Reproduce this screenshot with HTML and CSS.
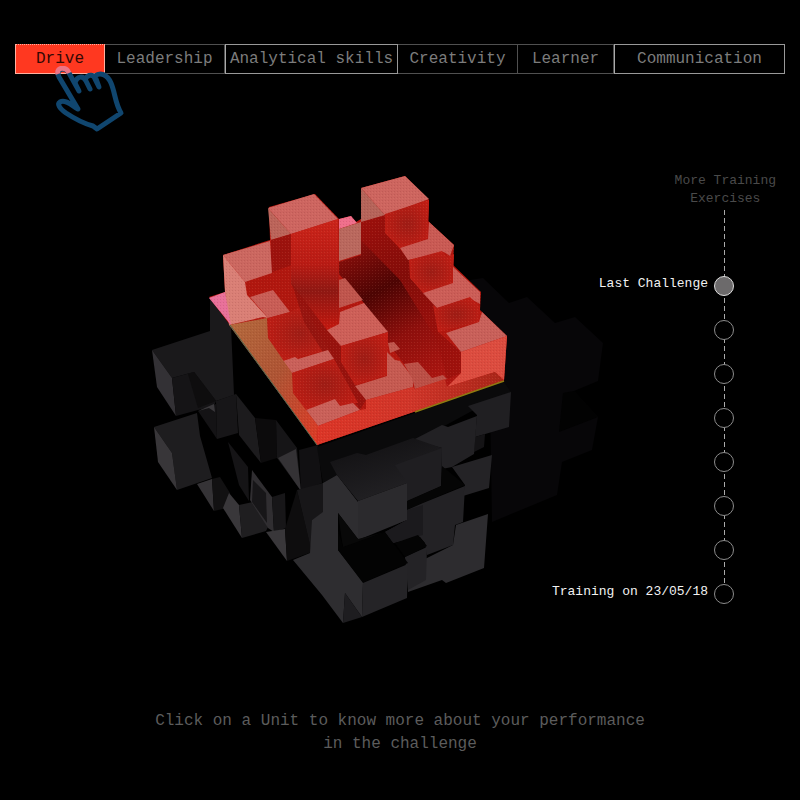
FILE: index.html
```html
<!DOCTYPE html>
<html lang="en">
<head>
<meta charset="utf-8">
<meta name="viewport" content="width=device-width, initial-scale=1">
<title>Drive</title>
<link rel="stylesheet" href="styles.css">
</head>
<body>
<header class="top">
  <nav class="tabs">
    <button class="tab tab-active" type="button">Drive</button>
    <button class="tab" type="button">Leadership</button>
    <button class="tab tab-bright" type="button">Analytical skills</button>
    <button class="tab" type="button">Creativity</button>
    <button class="tab" type="button">Learner</button>
    <button class="tab tab-bright" type="button">Communication</button>
  </nav>
  <svg class="hand" viewBox="54 66 72 68" aria-hidden="true">
    <path d="M78 109L59 77C55 69 65 66 69 73L79 91L75 83C77 76 83 75 86 81L90 89L85 79C89 73 94 75 95 79L99 87L95 76C100 72 107 74 111 83C115 92 115 103 121 113L97 129L93 126C82 123 75 119 66 113C59 108 57 104 60 102C65 99 71 105 78 109Z"/>
    <path class="hand-tip" d="M58 74C56 67 66 66 69 73"/>
  </svg>
</header>

<main class="stage">
  <svg class="cube" viewBox="140 165 480 470" role="img" aria-label="Skill cube">
    <defs>
      <linearGradient id="valley" gradientUnits="userSpaceOnUse" x1="350" y1="225" x2="440" y2="390">
        <stop offset="0" stop-color="#a3120e"/><stop offset=".38" stop-color="#4c0403"/><stop offset=".65" stop-color="#8e0f0c"/><stop offset="1" stop-color="#b01611"/>
      </linearGradient>
      <linearGradient id="tower" x1="0" y1="0" x2="0" y2="1">
        <stop offset="0" stop-color="#cb241a"/><stop offset=".4" stop-color="#b91b14"/><stop offset=".65" stop-color="#8f1813"/><stop offset="1" stop-color="#c4180f"/>
      </linearGradient>
      <radialGradient id="face" r=".65">
        <stop offset="0" stop-color="#9e1c15"/><stop offset="1" stop-color="#c41d14"/>
      </radialGradient>
      <linearGradient id="side" x1="0" y1="0" x2="1" y2="1">
        <stop offset="0" stop-color="#b36a3d"/><stop offset=".5" stop-color="#ae5434"/><stop offset="1" stop-color="#de3925"/>
      </linearGradient>
      <linearGradient id="base" x1="0" y1="0" x2="1" y2="0">
        <stop offset="0" stop-color="#dc3527"/><stop offset=".5" stop-color="#d03529"/><stop offset="1" stop-color="#a82518"/>
      </linearGradient>
      <linearGradient id="slope" gradientUnits="userSpaceOnUse" x1="360" y1="440" x2="380" y2="505">
        <stop offset="0" stop-color="#121113"/><stop offset="1" stop-color="#232225"/>
      </linearGradient>
      <pattern id="dots" width="3" height="3" patternUnits="userSpaceOnUse">
        <rect width="1" height="1" fill="#ffb090"/><rect x="1" y="2" width="1" height="1" fill="#5b1209"/>
      </pattern>
    </defs>

    <!-- distant block -->
    <path fill="#070608" d="M483 278L509 303 527 297 555 323 575 317 603 343 598 381 574 391 598 417 592 450 562 462 557 495 492 522 490 400 470 280Z"/>
    <path fill="#020202" d="M563 393L574 391 598 417 559 432Z"/>

    <!-- left side -->
    <path fill="#1a191b" d="M152 350L210 331 210 299 231 326 234 395 216 401 194 372 172 378Z"/>
    <path fill="#333135" d="M152 350L172 378 176 416 157 387Z"/>
    <path fill="#151416" d="M172 378L194 372 216 401 214 406 198 410 176 416Z"/>
    <path fill="#0e0d0e" d="M188 374L194 372 216 401 198 408Z"/>
    <path fill="#141315" d="M198 411L216 404 217 439Z"/>
    <path fill="#3a383b" d="M198 411L214 404 215 412 209 408Z"/>
    <path fill="#171618" d="M216 401L236 394 238 433 217 439Z"/>
    <path fill="#1c1b1d" d="M236 394L255 418 261 463 239 435Z"/>
    <path fill="#0c0b0c" d="M255 418L276 420 277 458 261 463Z"/>
    <path fill="#161517" d="M276 420L297 448 301 491 277 458Z"/>
    <path fill="#343235" d="M278 458L296 449 301 491Z"/>
    <path fill="#111012" d="M299 450L318 445 322 483 301 491Z"/>
    <path fill="#1e1d1f" d="M154 427L197 413 200 436 212 478 177 490 172 453Z"/>
    <path fill="#383639" d="M154 427L172 453 177 490 158 462Z"/>
    <path fill="#353336" d="M197 484L212 479 214 511Z"/>
    <path fill="#121112" d="M212 479L220 477 230 493 231 507 214 511Z"/>
    <path fill="#39373a" d="M223 508L229 493 239 505 242 538Z"/>
    <path fill="#1f1e20" d="M239 505L253 502 268 527 266 531 242 538Z"/>
    <path fill="#151416" d="M228 442L248 467 249 501 239 485Z"/>
    <path fill="#302e31" d="M252 470L272 497 274 532 268 528 250 500Z"/>
    <path fill="#171618" d="M253 480L266 493 267 523 252 502Z"/>
    <path fill="#171618" d="M272 497L285 493 286 528 274 532Z"/>
    <path fill="#39373a" d="M266 532L285 529 287 561Z"/>
    <path fill="#0e0d0e" d="M285 529L297 490 312 552 287 561Z"/>
    <path fill="#171618" d="M297 490L323 483 323 513 312 520 312 553Z"/>

    <!-- front side -->
    <path fill="#0a0a0b" d="M317 447L504 382 511 392 470 412 415 442 337 475 323 483Z"/>
    <path fill="#2e2d30" d="M323 483L337 475 358 502 358 539 338 513 338 550 363 582 362 617 345 593 343 623 322 595 293 560 310 553 312 520 323 512Z"/>
    <path fill="#1e1d20" d="M345 593L362 617 343 623Z"/>
    <path fill="#201f22" d="M468 406L511 392 509 427 475 437 477 415Z"/>
    <path fill="#141315" d="M475 437L485 434 484 447 474 452Z"/>
    <path fill="#222124" d="M413 440L442 425 448 427 477 416 474 454 452 467 442 469 442 448Z"/>
    <path fill="url(#slope)" d="M330 462L357 453 366 455 413 438 442 448 441 486 407 501 407 483 358 501 337 475Z"/>
    <path fill="#1f1e21" d="M395 465L442 448 441 486 407 501 407 483Z"/>
    <path fill="#2b2a2d" d="M358 501L407 483 407 520 358 540Z"/>
    <path fill="#050505" d="M407 501L441 486 442 466 465 485 423 503 407 510Z"/>
    <path fill="#232225" d="M423 503L465 486 463 522 455 525 453 545 427 555 425 543 420 537 393 543 385 532 407 520 407 510Z"/>
    <path fill="#1b1a1d" d="M407 510L423 505 423 535 393 543 385 532 407 520Z"/>
    <path fill="#242326" d="M452 467L492 455 489 488 463 496 465 485Z"/>
    <path fill="#2d2c2f" d="M427 558L453 545 456 525 488 514 484 568 446 583 442 580 408 592 408 565Z"/>
    <path fill="#242326" d="M405 557L427 547 426 580 408 590Z"/>
    <path fill="#080808" d="M338 513L358 539 385 532 343 548Z"/>
    <path fill="#030303" d="M343 547L385 532 408 563 363 583 338 550 338 530Z"/>
    <path fill="#252427" d="M363 583L408 564 407 598 362 617Z"/>
    <path fill="#040404" d="M395 543L418 535 427 546 405 557Z"/>

    <!-- active unit -->
    <path fill="#b3170f" d="M209 297L225 292 223 255 270 240 269 207 315 194 339 219 351 216 356 222 361 219 361 188 405 176 429 200 428 221 454 245 453 265 481 292 480 310 507 336 504 381 317 445 230 325Z"/>
    <path fill="url(#valley)" d="M361 222L385 215 385 233 410 260 410 278 437 308 438 332 461 352 461 373 447 387 430 378 418 362 404 364 388 343 364 303 339 274 339 262 361 255Z"/>
    <path fill="#9a100c" d="M361 222L385 215 385 233 410 260 410 278 437 308 438 332 461 352 461 373 447 379 437 340 400 280 361 240Z" opacity=".7"/>
    <path fill="#cd655f" d="M361 188L405 176 429 199 385 215Z"/>
    <path fill="#b5645a" d="M361 188L385 215 361 222Z"/>
    <path fill="url(#face)" d="M385 214L429 200 428 238 400 248 385 233Z"/>
    <path fill="#c95a54" d="M429 222L454 245 450 256 444 252 408 260 400 248 428 239Z"/>
    <path fill="url(#face)" d="M409 260L442 251 447 257 454 254 453 283 423 293 410 278Z"/>
    <path fill="#cb5d57" d="M453 267L480 292 480 304 469 298 437 308 423 293 453 283Z"/>
    <path fill="url(#face)" d="M437 308L470 297 480 307 479 322 438 332 433 305Z"/>
    <path fill="#c8605a" d="M482 312L507 336 461 352 446 333 479 322Z"/>
    <path fill="#dc4c3f" d="M461 352L507 336 504 380 495 372 447 387 461 373Z"/>
    <path fill="#ef6f8c" d="M339 219L351 216 357 223 339 229Z"/>
    <path fill="#b9685e" d="M339 229L361 222 361 254 339 261Z"/>
    <path fill="#cd6560" d="M268 208L314 194 338 219 291 234Z"/>
    <path fill="#bb645a" d="M268 208L291 234 271 240Z"/>
    <path fill="#9c120d" d="M271 240L291 234 292 290 271 273Z"/>
    <path fill="#b0170f" d="M245 282L292 265 315 320 290 312 273 290 250 297Z"/>
    <path fill="url(#tower)" d="M291 234L338 219 339 324 327 330 291 284Z"/>
    <path fill="#cb6760" d="M223 255L270 241 272 273 245 282Z"/>
    <path fill="#d97f76" d="M223 255L245 282 247 295 268 318 263 317 229 325 225 292Z"/>
    <path fill="#e8709a" d="M209 298L225 292 231 325Z"/>
    <path fill="#c85d56" d="M250 297L273 290 290 312 268 318Z"/>
    <path fill="url(#face)" d="M268 318L290 312 304 305 334 359 328 350 283 361 268 338Z"/>
    <path fill="#8b110d" d="M292 284L327 330 341 346 341 360 366 400 360 410 334 370 304 322Z" opacity=".7"/>
    <path fill="#c9605a" d="M283 361L295 357 298 359 328 350 334 359 292 373Z"/>
    <path fill="url(#face)" d="M292 373L334 359 358 403 353 403 340 406 335 399 306 410 293 393Z"/>
    <path fill="#c96059" d="M306 410L335 399 340 406 353 403 360 410 318 426Z"/>
    <path fill="#bf554d" d="M339 280L345 278 363 300 339 308Z"/>
    <path fill="#cd5f58" d="M340 312L364 303 388 332 341 346 327 330 339 324Z"/>
    <path fill="url(#face)" d="M341 346L388 332 387 375 355 385 341 362Z"/>
    <path fill="#c0564d" d="M388 343L394 342 400 349 390 353Z"/>
    <path fill="#c55a51" d="M355 386L387 376 387 352 395 360 400 361 413 378 413 387 366 400Z"/>
    <path fill="#bb4f46" d="M404 364L418 362 432 378 443 375 447 379 415 389 412 378Z"/>
    <path fill="url(#side)" d="M229 325L267 318 268 338 292 373 293 393 306 410 318 426 317 445Z"/>
    <path fill="url(#base)" d="M318 426L360 410 366 409 366 400 413 387 415 389 445 379 447 387 495 372 504 381 317 445Z"/>
    <path fill="url(#dots)" opacity=".12" d="M209 297L225 292 223 255 270 240 269 207 315 194 339 219 351 216 356 222 361 219 361 188 405 176 429 200 428 221 454 245 453 265 481 292 480 310 507 336 504 381 317 445 230 325Z"/>
    <path fill="none" stroke="#8d7a12" stroke-width="1.5" d="M415 412L504 381"/>
    <path fill="none" stroke="#4f6950" stroke-width="1" d="M230 325L317 445"/>
  </svg>

  <aside class="history">
    <h2 class="history-title">More Training<br>Exercises</h2>
    <ol class="timeline">
      <li><button class="step step-current" type="button"><span class="step-label">Last Challenge</span><span class="dot"></span></button></li>
      <li><button class="step" type="button" aria-label="Training 7"><span class="dot"></span></button></li>
      <li><button class="step" type="button" aria-label="Training 6"><span class="dot"></span></button></li>
      <li><button class="step" type="button" aria-label="Training 5"><span class="dot"></span></button></li>
      <li><button class="step" type="button" aria-label="Training 4"><span class="dot"></span></button></li>
      <li><button class="step" type="button" aria-label="Training 3"><span class="dot"></span></button></li>
      <li><button class="step" type="button" aria-label="Training 2"><span class="dot"></span></button></li>
      <li><button class="step" type="button"><span class="step-label">Training on 23/05/18</span><span class="dot"></span></button></li>
    </ol>
  </aside>
</main>

<footer class="hint">Click on a Unit to know more about your performance<br>in the challenge</footer>
</body>
</html>
```
FILE: styles.css
```css
* {
  box-sizing: border-box;
}

body {
  margin: 0;
  background: #000;
  color: #666;
  font-family: "Liberation Mono", monospace;
  font-size: 16px;
}

button {
  padding: 0;
  border: 0;
  background: none;
  color: inherit;
  font: inherit;
  cursor: pointer;
}

.top {
  position: relative;
  padding: 44px 15px 0;
}

.tabs {
  display: grid;
  grid-template-columns: 90fr 120fr 173fr 120fr 96fr 171fr;
}

.tab {
  height: 30px;
  border: 1px solid #505050;
  border-left-width: 0;
  color: #7c7c7c;
  white-space: nowrap;
}

.tab-bright {
  border-color: #999;
  border-left: 1px solid #aaa;
}

.tab-active {
  border: 1px solid #ffb0a0;
  border-top-style: dotted;
  background: #ff3820;
  color: #330804;
}

.hand {
  position: absolute;
  top: 66px;
  left: 54px;
  width: 72px;
  height: 68px;
  fill: none;
  stroke: #10466f;
  stroke-width: 5;
  stroke-linejoin: round;
  pointer-events: none;
}

.hand .hand-tip {
  stroke: #ec7486;
}

.stage {
  display: grid;
  padding-top: 91px;
}

.cube {
  grid-area: 1 / 1;
  width: 60%;
  margin-left: 17.5%;
}

.history {
  grid-area: 1 / 1;
  justify-self: end;
  display: flex;
  flex-direction: column;
  align-items: flex-end;
  padding-top: 7px;
}

.history-title {
  margin: 0 24px 0 0;
  color: #4a4a4a;
  font-size: 13px;
  font-weight: 400;
  line-height: 18px;
  text-align: center;
}

.timeline {
  margin: 2px 66px 0 0;
  padding: 54px 0 0;
  list-style: none;
  background: repeating-linear-gradient(#aaa 0 5px, transparent 5px 8px) right 9px top / 1px calc(100% - 22px) no-repeat;
}

.timeline li {
  display: flex;
  justify-content: flex-end;
  align-items: center;
  height: 44px;
}

.step {
  display: flex;
  align-items: center;
  gap: 6px;
  color: #f2f2f2;
  font-size: 13px;
  line-height: 16px;
}

.step-label {
  padding-bottom: 4px;
}

.dot {
  width: 20px;
  height: 20px;
  border: 1px solid #8c8c8c;
  border-radius: 50%;
  background: #000;
}

.step-current .dot {
  border-color: #ddd;
  background: #6c6a6b;
}

.hint {
  padding: 75px 20px 44px;
  color: #5c5c5c;
  line-height: 23px;
  text-align: center;
}
```
